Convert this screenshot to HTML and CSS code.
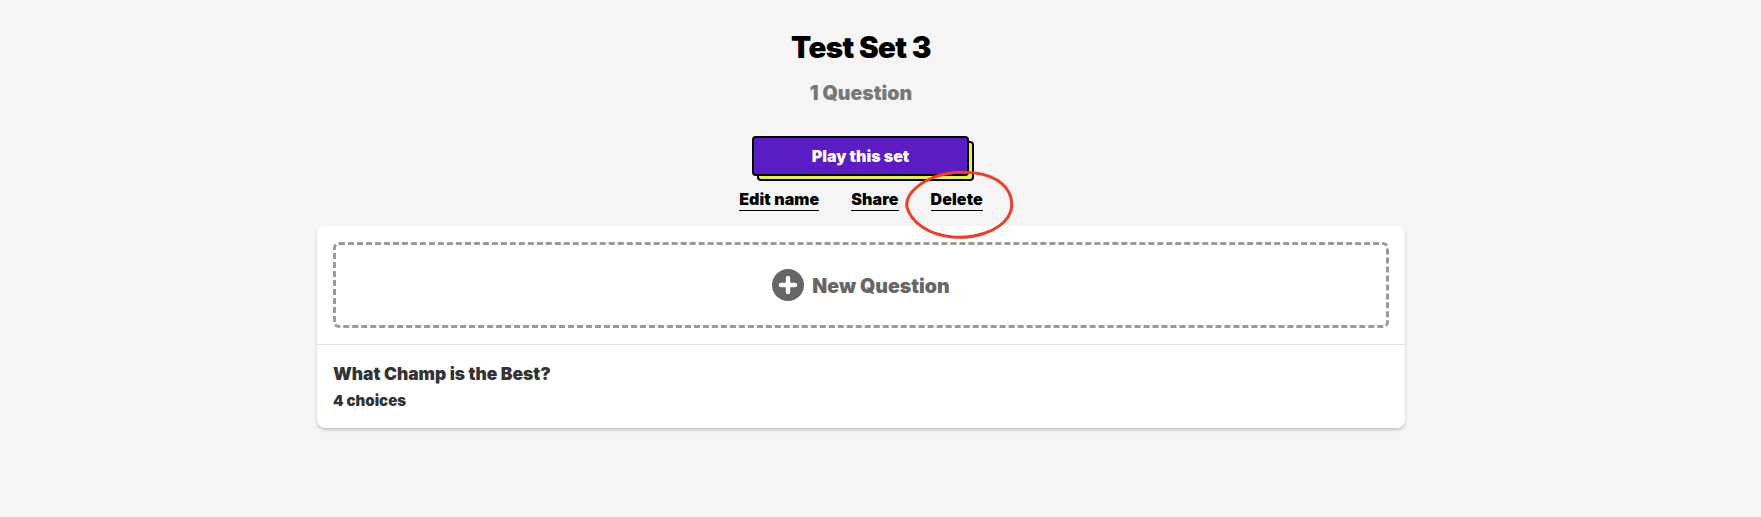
FILE: index.html
```html
<!DOCTYPE html>
<html lang="en">
<head>
<meta charset="utf-8">
<title>Test Set 3</title>
<link rel="stylesheet" href="styles.css">
</head>
<body>
<main class="page">
  <header class="head">
    <h1 class="title">Test Set 3</h1>
    <p class="count">1 Question</p>
    <a class="play" href="#">Play this set</a>
    <nav class="links">
      <a class="link" href="#">Edit name</a>
      <a class="link" href="#">Share</a>
      <span class="delete-wrap">
        <a class="link" href="#">Delete</a>
        <svg class="circle" width="116" height="72" viewBox="0 0 116 72" aria-hidden="true">
          <path d="M30 9C48 1 78 1 95 11c14 9 19 24 11 37-9 14-33 22-56 20C28 66 9 54 5 38 3 27 14 16 30 9c6-3 12-4 20-5" fill="none" stroke="#f23c24" stroke-width="3" stroke-linecap="round"/>
        </svg>
      </span>
    </nav>
  </header>
  <section class="card">
    <div class="new-wrap">
      <a class="new" href="#">
        <svg width="32" height="32" viewBox="0 0 32 32" aria-hidden="true">
          <circle cx="16" cy="16" r="16" fill="#666"/>
          <path d="M16 9v14M9 16h14" stroke="#fff" stroke-width="4.4" stroke-linecap="round"/>
        </svg>
        <span class="new-label">New Question</span>
      </a>
    </div>
    <div class="item">
      <div class="q">What Champ is the Best?</div>
      <div class="choices">4 choices</div>
    </div>
  </section>
</main>
</body>
</html>
```
FILE: styles.css
```css
* { box-sizing: border-box; }
html, body { margin: 0; height: 100%; }
body {
  background: #f5f5f5;
  font-family: "Inter", "Liberation Sans", sans-serif;
  font-weight: 900;
  overflow: hidden;
  padding-right: 39px;
}
.page { width: 1088px; margin: 0 auto; }
.head { display: flex; flex-direction: column; align-items: center; }
.title {
  margin: 26px 0 0;
  font-size: 29.5px;
  line-height: 42px;
  font-weight: 900;
  color: #000;
  letter-spacing: -0.6px;
}
.count {
  margin: 13px 0 0;
  font-size: 19.5px;
  line-height: 24px;
  color: #777;
}
.play {
  display: block;
  width: 217px;
  height: 40px;
  margin: 31px 1px 0 0;
  background: #5b1cc4;
  border: 2px solid #000;
  border-radius: 4px;
  box-shadow: 5px 5px 0 -2px #e6f53c, 5px 5px 0 0 #000;
  color: #fff;
  font-size: 16px;
  line-height: 36px;
  text-align: center;
  text-decoration: none;
}
.links { display: flex; gap: 32px; margin-top: 13px; height: 37px; }
.link {
  display: block;
  height: 22px;
  color: #000;
  font-size: 16px;
  letter-spacing: 0.1px;
  line-height: 20px;
  text-decoration: none;
  border-bottom: 1px solid #000;
}
.delete-wrap { position: relative; display: block; }
.circle { position: absolute; left: -29px; top: -20px; }
.card {
  background: #fff;
  border-radius: 8px;
  box-shadow: 0 2px 3px rgba(0, 0, 0, 0.2);
}
.new-wrap { padding: 16px; border-bottom: 1px solid #e2e2e2; }
.new {
  display: flex;
  align-items: center;
  justify-content: center;
  gap: 8px;
  height: 86px;
  border: 3px dashed #9a9a9a;
  border-radius: 6px;
  color: #666;
  font-size: 19.5px;
  text-decoration: none;
}
.new-label { padding-top: 2px; }
.item { padding: 17px 16px 15px; color: #333; }
.q { font-size: 17.4px; line-height: 24px; }
.choices { margin-top: 3px; font-size: 15px; line-height: 24px; }
```
